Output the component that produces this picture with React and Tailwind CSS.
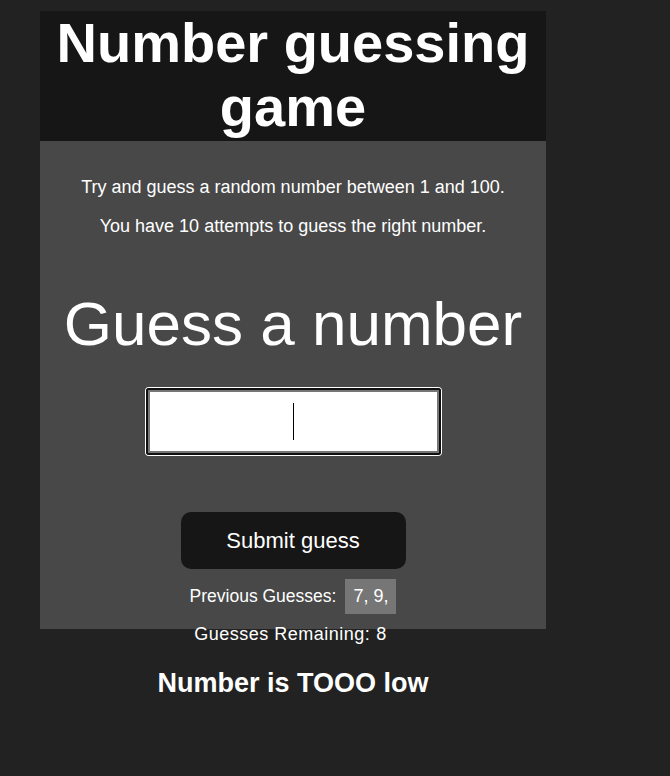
import React, { useState } from 'react';

const App = () => {
  const [guess, setGuess] = useState('');
  const previous = [7, 9];
  const remaining = 8;

  return (
    <div className="min-h-screen bg-[#222222] font-['Liberation_Sans',Arial,sans-serif] text-white">
      <div className="ml-[40px] w-[506px] pt-[11px]">
        {/* Header */}
        <div className="h-[130px] bg-[#161616]">
          <h1 className="text-center text-[56px] font-bold leading-[1.15]">
            Number guessing game
          </h1>
        </div>

        {/* Game panel - fixed height, the last rows spill below it */}
        <div className="flex h-[488px] flex-col items-center bg-[#484848] pt-[36px]">
          <p className="shrink-0 text-[18px] leading-[21px]">
            Try and guess a random number between 1 and 100.
          </p>
          <p className="mt-[18px] shrink-0 text-[18px] leading-[21px]">
            You have 10 attempts to guess the right number.
          </p>

          <h2 className="mt-[51px] shrink-0 text-[62px] leading-[71px]">Guess a number</h2>

          <div className="relative mt-[29px] shrink-0 rounded-[3px] border-2 border-[#101010] shadow-[0_0_0_1px_#ffffff]">
            <input
              type="text"
              value={guess}
              onChange={(e) => setGuess(e.target.value)}
              className="block h-[63px] w-[291px] border-2 border-[#767676] bg-white text-center text-[32px] text-black outline-none"
            />
            <span className="pointer-events-none absolute left-1/2 top-[13px] h-[37px] w-px bg-black" />
          </div>

          <button className="mt-[57px] h-[57px] w-[225px] shrink-0 rounded-[10px] bg-[#161616] text-[22px] text-white">
            Submit guess
          </button>

          <div className="mt-[10px] flex shrink-0 items-center leading-[21px]">
            <span className="text-[17.5px]">Previous Guesses:</span>
            <span className="ml-[9px] bg-[#767676] px-[8px] py-[7px] text-[18px]">
              {previous.map((n) => `${n}, `).join('').trim()}
            </span>
          </div>

          <div className="mt-[10px] flex shrink-0 text-[18px] leading-[21px] tracking-[0.5px]">
            <span>Guesses Remaining:</span>
            <span className="ml-[6px] pr-[5px]">{remaining}</span>
          </div>

          <h3 className="mt-[23px] shrink-0 text-[27px] font-bold leading-[31px]">
            Number is TOOO low
          </h3>
        </div>
      </div>
    </div>
  );
};

export default App;
